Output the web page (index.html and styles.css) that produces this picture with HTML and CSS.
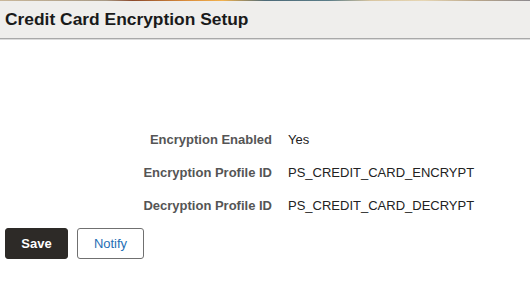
FILE: index.html
```html
<!DOCTYPE html>
<html>
<head>
<meta charset="utf-8">
<link rel="stylesheet" href="styles.css">
</head>
<body>
<div class="strip"></div>
<header class="page-header">
  <h1 class="title">Credit Card Encryption Setup</h1>
</header>
<main class="content">
  <div class="form">
    <div class="row"><span class="label">Encryption Enabled</span><span class="value">Yes</span></div>
    <div class="row"><span class="label">Encryption Profile ID</span><span class="value">PS_CREDIT_CARD_ENCRYPT</span></div>
    <div class="row"><span class="label">Decryption Profile ID</span><span class="value">PS_CREDIT_CARD_DECRYPT</span></div>
  </div>
  <div class="actions">
    <button class="btn btn-primary">Save</button>
    <button class="btn btn-secondary">Notify</button>
  </div>
</main>
</body>
</html>
```

FILE: styles.css
```css
html, body {
  margin: 0;
  padding: 0;
  background: #ffffff;
  font-family: "Liberation Sans", Arial, sans-serif;
}
.strip {
  height: 1px;
  background: linear-gradient(90deg, #c9b79a 0%, #a89a86 20%, #8c4a2c 25%, #d98b3a 35%, #f2b24e 42%, #4d6a78 50%, #5b7d88 62%, #d9c6a2 70%, #e6d6b4 80%, #b8a58a 90%, #8d8a8f 100%);
}
.page-header {
  background: #efeeec;
  height: 37px;
  border-bottom: 1px solid #a9a9a9;
  box-shadow: 0 1px 0 #dcdcdc;
  display: flex;
  align-items: center;
  padding: 0 5px;
}
.title {
  margin: 0;
  font-size: 17.4px;
  font-weight: bold;
  color: #1a1a1a;
}
.content {
  padding: 0 5px;
}
.form {
  display: grid;
  grid-template-columns: 267px auto;
  row-gap: 17px;
  padding-top: 93px;
  column-gap: 16px;
}
.row {
  display: contents;
}
.label {
  text-align: right;
  font-weight: bold;
  font-size: 13px;
  color: #555555;
  line-height: 16px;
}
.value {
  font-size: 13px;
  color: #222222;
  line-height: 16px;
}
.actions {
  display: flex;
  gap: 9px;
  margin-top: 14px;
}
.btn {
  height: 31px;
  border-radius: 3px;
  font-family: "Liberation Sans", Arial, sans-serif;
  font-size: 13px;
  padding: 0;
  cursor: pointer;
}
.btn-primary {
  width: 63px;
  background: #2d2a27;
  color: #ffffff;
  font-weight: bold;
  border: 1px solid #2d2a27;
}
.btn-secondary {
  width: 67px;
  background: #ffffff;
  color: #1f6fb5;
  border: 1px solid #707070;
}
```
